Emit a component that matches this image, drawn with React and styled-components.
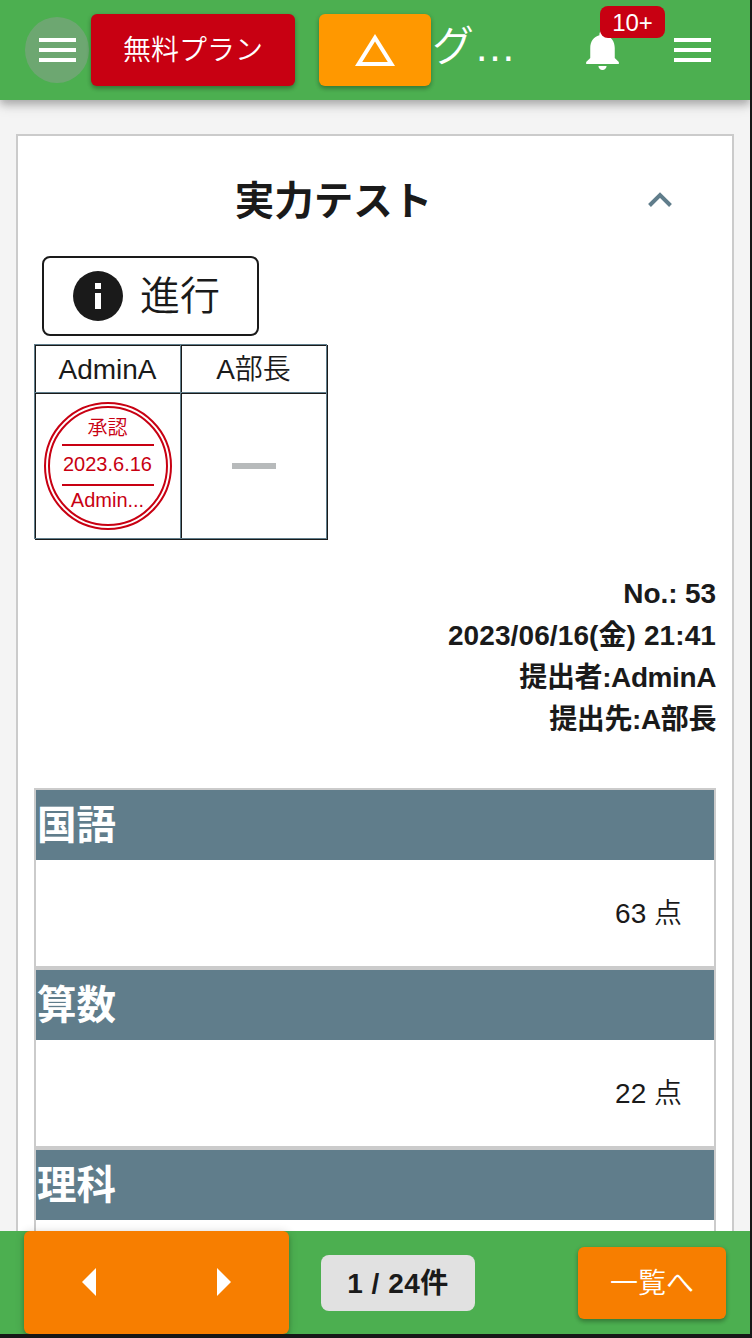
import React from "react";
import styled, { createGlobalStyle, css } from "styled-components";

const color = {
  green: "#4caf50",
  red: "#c80012",
  amber: "#ff9800",
  orange: "#f77e00",
  slate: "#607d8b",
  ink: "#1a1a1a",
  line: "#cbcbcb",
};

const GlobalStyle = createGlobalStyle`
  * { box-sizing: border-box; }
  html, body { margin: 0; background: #171717; }
  body {
    font-family: "Liberation Sans", "Noto Sans CJK JP", sans-serif;
    color: ${color.ink};
    font-weight: 350;
  }
  button { font: inherit; color: inherit; border: 0; padding: 0; background: none; }
  svg { display: block; }
`;

const Screen = styled.div`
  width: 750px;
  height: 1334px;
  display: flex;
  flex-direction: column;
  overflow: hidden;
  background: #f4f4f4;
`;

const raised = css`
  box-shadow: 0 3px 4px rgba(0, 0, 0, 0.2), 0 1px 5px rgba(0, 0, 0, 0.16);
`;

const TopBar = styled.header`
  flex: none;
  height: 100px;
  display: flex;
  align-items: center;
  padding: 0 26px 0 25px;
  background: ${color.green};
  color: #fff;
  box-shadow: 0 4px 8px rgba(0, 0, 0, 0.22), 0 6px 12px rgba(0, 0, 0, 0.13);
  position: relative;
  z-index: 1;
`;

const MenuButton = styled.button`
  width: 64px;
  height: 66px;
  display: grid;
  place-items: center;
  border-radius: 50%;
  background: ${(p) => (p.$active ? "rgba(172, 152, 180, 0.34)" : "none")};
`;

const SolidButton = styled.button`
  height: 72px;
  width: ${(p) => p.$width}px;
  display: flex;
  align-items: center;
  justify-content: center;
  padding-top: ${(p) => p.$drop || 0}px;
  border-radius: 6px;
  background: ${(p) => p.$bg};
  color: #fff;
  font-size: 28px;
  line-height: 40px;
  ${raised}
`;

const PlanButton = styled(SolidButton)`
  margin: 0 24px 0 2px;
`;

const GroupName = styled.span`
  flex: 1;
  padding: 0 0 7px 1px;
  font-size: 42px;
  line-height: 60px;
`;

const BellWrap = styled.div`
  position: relative;
  margin-right: 33px;
`;

const Badge = styled.span`
  position: absolute;
  left: 22px;
  top: -20px;
  width: 65px;
  height: 32px;
  border-radius: 8px;
  background: ${color.red};
  font-size: 24px;
  line-height: 33px;
  text-align: center;
`;

const Content = styled.main`
  flex: 1;
  min-height: 0;
  overflow: hidden;
  padding: 34px 16px 0;
`;

const Card = styled.article`
  height: 1200px;
  padding: 0 16px;
  border: 2px solid ${color.line};
  background: #fff;
`;

const TitleRow = styled.div`
  height: 120px;
  display: flex;
  align-items: center;
  padding: 8px 44px 0 0;
`;

const Title = styled.h1`
  flex: 1;
  margin: 0;
  padding: 1px 15px 0 0;
  font-size: 39.5px;
  font-weight: 700;
  line-height: 58px;
  text-align: center;
`;

const StatusButton = styled.button`
  width: 217px;
  height: 80px;
  margin: 0 0 8px 8px;
  padding: 0 0 0 29px;
  display: flex;
  align-items: center;
  gap: 17px;
  border: 2px solid ${color.ink};
  border-radius: 8px;
  font-size: 40px;
  line-height: 60px;
`;

const ApprovalGrid = styled.div`
  width: 293px;
  display: grid;
  grid-template-columns: 146px 146px;
  grid-template-rows: 48px 146px;
  border: solid ${color.slate};
  border-width: 0 1px 1px 0;
  box-shadow: 1px 1px 0 ${color.ink};
`;

const ApprovalCell = styled.div`
  display: grid;
  place-items: center;
  padding: ${(p) => (p.$head ? "2px 0 0" : "0")};
  border: solid ${color.slate};
  border-width: 1px 0 0 1px;
  box-shadow: inset 1px 1px 0 ${color.ink};
  font-size: 28px;
  line-height: 40px;
`;

const Stamp = styled.div`
  width: 128px;
  height: 128px;
  display: flex;
  flex-direction: column;
  align-items: center;
  padding-top: 5px;
  border: 6px double ${color.red};
  border-radius: 50%;
  color: ${color.red};
  font-size: 20px;
`;

const StampLine = styled.span`
  height: ${(p) => p.$height}px;
  line-height: ${(p) => p.$lh}px;
`;

const StampDate = styled.span`
  width: 92px;
  height: 42px;
  border: solid ${color.red};
  border-width: 2px 0;
  line-height: 37px;
  text-align: center;
  white-space: nowrap;
`;

const Pending = styled.span`
  width: 44px;
  height: 6px;
  background: #b7babb;
`;

const Meta = styled.div`
  margin: 34px 0 47px;
  font-size: 28px;
  font-weight: 700;
  line-height: 42px;
  text-align: right;
`;

const MetaLine = styled.div`
  letter-spacing: ${(p) => p.$track || 0}px;
`;

const Subject = styled.section`
  height: 180px;
  border: 2px solid ${color.line};
`;

const SubjectName = styled.h2`
  height: 70px;
  margin: 0;
  padding-left: 1px;
  background: ${color.slate};
  color: #fff;
  font-size: 39.5px;
  font-weight: 700;
  line-height: 70px;
`;

const Score = styled.div`
  height: 106px;
  padding: 1px 32px 0 0;
  font-size: 28px;
  line-height: 106px;
  text-align: right;
`;

const BottomBar = styled.footer`
  flex: none;
  height: 103px;
  display: flex;
  align-items: center;
  padding: 0 24px;
  background: ${color.green};
  position: relative;
`;

const Pager = styled.div`
  width: 265px;
  height: 103px;
  display: flex;
  border-radius: 6px;
  background: ${color.orange};
  box-shadow: 0 3px 4px rgba(0, 0, 0, 0.2), 0 1px 10px rgba(0, 0, 0, 0.16);
`;

const PagerButton = styled.button`
  flex: 1;
  padding: ${(p) => (p.$next ? "0 0 2px 2px" : "0 4px 2px 0")};
  display: grid;
  place-items: center;
`;

const Count = styled.div`
  width: 154px;
  height: 56px;
  margin: 1px auto 0 32px;
  border-radius: 8px;
  background: #e1e1e1;
  font-size: 28px;
  font-weight: 700;
  letter-spacing: 0.5px;
  line-height: 58px;
  text-align: center;
`;

const MenuIcon = () => (
  <svg width="37" height="24" viewBox="0 0 37 24" fill="#fff">
    <path d="M0 0h37v4H0zM0 10h37v4H0zM0 20h37v4H0z" />
  </svg>
);

const TriangleIcon = () => (
  <svg width="48" height="48" viewBox="0 0 24 24" fill="#fff">
    <path d="M12 7.77 18.39 18H5.61L12 7.77M12 4 2 20h20L12 4z" />
  </svg>
);

const BellIcon = () => (
  <svg width="49" height="48" viewBox="0 0 24 24" fill="#fff" preserveAspectRatio="none">
    <path d="M12 22c1.1 0 2-.9 2-2h-4c0 1.1.89 2 2 2zm6-6v-5c0-3.07-1.64-5.64-4.5-6.32V4c0-.83-.67-1.5-1.5-1.5s-1.5.67-1.5 1.5v.68C7.63 5.36 6 7.92 6 11v5l-2 2v1h16v-1l-2-2z" />
  </svg>
);

const InfoIcon = () => (
  <svg width="50" height="50" viewBox="0 0 50 50">
    <circle cx="25" cy="25" r="25" fill={color.ink} />
    <path d="M22 12h6v6h-6zM22 22h6v16h-6z" fill="#fff" />
  </svg>
);

const ChevronUp = () => (
  <svg width="24" height="16" viewBox="0 0 24 16" fill="none" stroke={color.slate} strokeWidth="4">
    <path d="M1.5 13.5 12 3l10.500 10.500" />
  </svg>
);

const Arrow = ({ next }) => (
  <svg width="14" height="28" viewBox="0 0 14 28" fill="#fff">
    <path d={next ? "M0 0 14 14 0 28z" : "M14 0 0 14 14 28z"} />
  </svg>
);

const subjects = [
  { name: "国語", score: "63 点" },
  { name: "算数", score: "22 点" },
  { name: "理科", score: "" },
];

export default function App() {
  return (
    <>
      <GlobalStyle />
      <Screen lang="ja">
        <TopBar>
          <MenuButton $active aria-label="menu"><MenuIcon /></MenuButton>
          <PlanButton $bg={color.red} $width={204} $drop={2}>無料プラン</PlanButton>
          <SolidButton $bg={color.amber} $width={112}><TriangleIcon /></SolidButton>
          <GroupName>グ…</GroupName>
          <BellWrap>
            <BellIcon />
            <Badge>10+</Badge>
          </BellWrap>
          <MenuButton aria-label="account menu"><MenuIcon /></MenuButton>
        </TopBar>
        <Content>
          <Card>
            <TitleRow>
              <Title>実力テスト</Title>
              <ChevronUp />
            </TitleRow>
            <StatusButton><InfoIcon />進行</StatusButton>
            <ApprovalGrid>
              <ApprovalCell $head>AdminA</ApprovalCell>
              <ApprovalCell $head>A部長</ApprovalCell>
              <ApprovalCell>
                <Stamp>
                  <StampLine $height={31} $lh={31}>承認</StampLine>
                  <StampDate>2023.6.16</StampDate>
                  <StampLine $height={30} $lh={28}>Admin...</StampLine>
                </Stamp>
              </ApprovalCell>
              <ApprovalCell><Pending /></ApprovalCell>
            </ApprovalGrid>
            <Meta>
              <MetaLine $track={-0.1}>No.: 53</MetaLine>
              <MetaLine $track={0.1}>2023/06/16(金) 21:41</MetaLine>
              <MetaLine $track={-0.4}>提出者:AdminA</MetaLine>
              <MetaLine $track={-0.4}>提出先:A部長</MetaLine>
            </Meta>
            {subjects.map((s) => (
              <Subject key={s.name}>
                <SubjectName>{s.name}</SubjectName>
                <Score>{s.score}</Score>
              </Subject>
            ))}
          </Card>
        </Content>
        <BottomBar>
          <Pager>
            <PagerButton aria-label="previous"><Arrow /></PagerButton>
            <PagerButton $next aria-label="next"><Arrow next /></PagerButton>
          </Pager>
          <Count>1 / 24件</Count>
          <SolidButton $bg={color.orange} $width={148} $drop={2}>一覧へ</SolidButton>
        </BottomBar>
      </Screen>
    </>
  );
}
